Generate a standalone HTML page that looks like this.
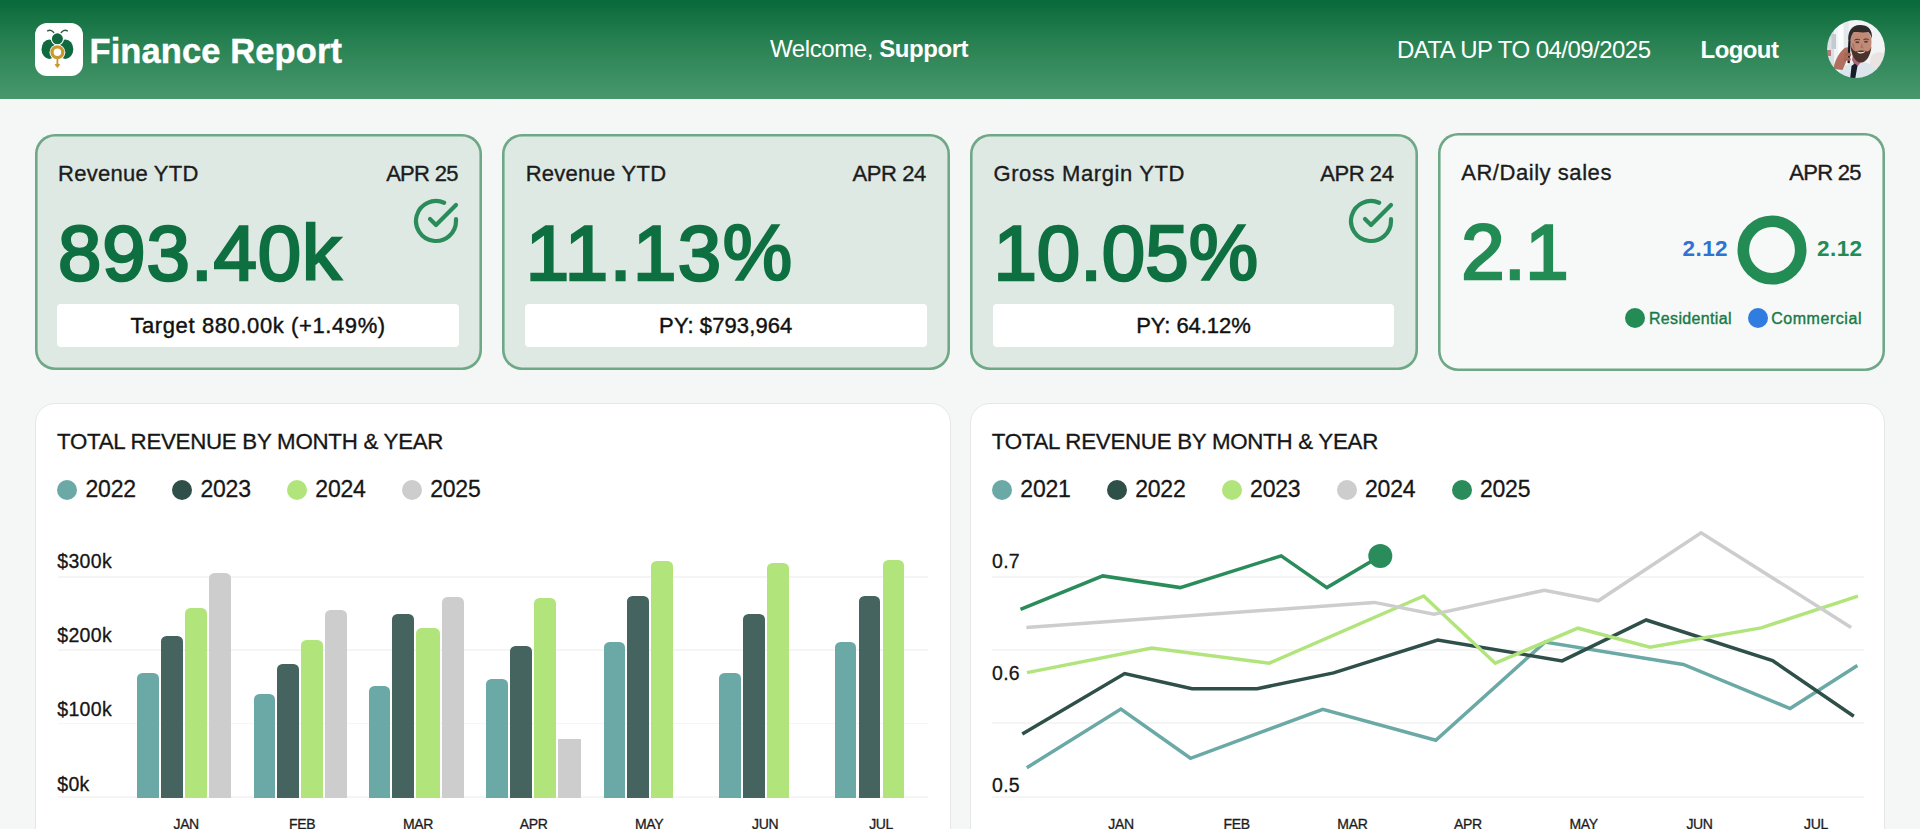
<!DOCTYPE html><html lang="en"><head><meta charset="utf-8"><title>Finance Report</title><style>
*{box-sizing:border-box;margin:0;padding:0}
html,body{width:1920px;height:829px;overflow:hidden}
body{background:#f5f7f6;font-family:"Liberation Sans", sans-serif;color:#1a1a1a;position:relative}
.t{position:absolute;white-space:nowrap;line-height:1}
.hdr{position:absolute;left:0;top:0;width:1920px;height:98.5px;background:linear-gradient(180deg,#09693a 0%,#298253 45%,#48986c 100%)}
.logo{position:absolute;left:34.5px;top:22.5px;width:48px;height:53.5px;background:#fff;border-radius:12px}
.hdr .t{color:#fff}
.card{position:absolute;top:134px;width:447.6px;height:235.5px;border:3px solid transparent;border-radius:20px;background:#dee9e3}
.card::before{content:'';position:absolute;left:-3px;top:-3px;right:-3px;bottom:-3px;border-radius:20px;box-shadow:inset 0 0 0 2.6px #6ea886}
.card.light{background:#f6f9f7}
.card .ttl{font-size:22px;color:#1c1c1c;-webkit-text-stroke:0.35px #1c1c1c}
.card .big{font-weight:normal}
.pill{position:absolute;left:19.6px;top:167px;width:401.5px;height:42.5px;background:#fff;border-radius:4px;text-align:center;font-size:22px;line-height:43.5px;color:#111;-webkit-text-stroke:0.4px #111}
.panel{position:absolute;top:403.3px;width:915.5px;height:460px;background:#fff;border:1px solid #e5e8e6;border-radius:20px}
.dot{position:absolute;width:20px;height:20px;border-radius:50%}
.grid{position:absolute;height:1.8px;background:#f5f5f5}
.bar{position:absolute;border-radius:5.5px 5.5px 0 0}
</style></head><body>
<div class="hdr">
<div class="logo"><svg style="position:absolute;left:-0.6px;top:-0.3px" width="48" height="53.5" viewBox="0 0 48 53.5"><path d="M13.6 8.9c2.6-1.5 5.3-.4 7.3 3.4" fill="none" stroke="#2c5a43" stroke-width="1.3" stroke-linecap="round"/><path d="M33.4 8.9c-2.6-1.5-5.3-.4-7.3 3.4" fill="none" stroke="#2c5a43" stroke-width="1.3" stroke-linecap="round"/><ellipse cx="15.4" cy="27.2" rx="7.9" ry="9.7" fill="#0f6a3f"/><ellipse cx="31.4" cy="27.2" rx="7.9" ry="9.7" fill="#0f6a3f"/><circle cx="23.4" cy="16.8" r="6.1" fill="#0f6a3f" stroke="#fff" stroke-width="1.2"/><circle cx="23.4" cy="30.3" r="7.9" fill="#fff"/><circle cx="23.4" cy="30.3" r="5.4" fill="none" stroke="#c9992e" stroke-width="3.3"/><rect x="22.5" y="35" width="1.8" height="8.5" fill="#c9992e"/><path d="M20.5 42.6l2.9-1.2 2.9 1.2-2.9 3.4z" fill="#c9992e"/></svg></div>
<span class="t" id="h1" style="left:89.5px;top:33.8px;font-size:34.5px;font-weight:bold;letter-spacing:0.1px;-webkit-text-stroke:0.4px #fff">Finance Report</span>
<span class="t" id="h2" style="left:770px;top:37.3px;font-size:24px;letter-spacing:-0.42px">Welcome, <b>Support</b></span>
<span class="t" id="h3" style="left:1397px;top:37.6px;font-size:24px;letter-spacing:-0.53px">DATA UP TO 04/09/2025</span>
<span class="t" id="h4" style="left:1700.6px;top:37.6px;font-size:24px;font-weight:bold;letter-spacing:-0.6px">Logout</span>
<svg style="position:absolute;left:1827px;top:20px" width="58" height="58" viewBox="0 0 58 58"><defs><clipPath id="av"><circle cx="29" cy="29" r="29"/></clipPath><filter id="bl" x="-10%" y="-10%" width="120%" height="120%"><feGaussianBlur stdDeviation="0.7"/></filter></defs><g clip-path="url(#av)"><g filter="url(#bl)"><rect x="-4" y="-4" width="66" height="66" fill="#f1f3f4"/><rect x="-2" y="6" width="9" height="40" fill="#d9dfe2"/><rect x="4.5" y="14" width="4.5" height="15" fill="#c3cbd0"/><rect x="11" y="-2" width="5" height="42" fill="#fbfcfc"/><rect x="17" y="-2" width="4.5" height="42" fill="#e4e8ea"/><path d="M44 36c5-5 12-5 18 0v26H40z" fill="#e9e4e2"/><rect x="-2" y="30" width="6" height="6" fill="#b77a78"/><path d="M9 62c1-12 9-18 19-20l8 0c10 2 15 7 17 20z" fill="#dde5ec"/><path d="M25 40l4 8 7-8-1-6h-9z" fill="#a7677a"/><path d="M23.5 22c0-8 4-12 10.500-12 6.500 0 10.500 4 10.500 12 0 10-4.500 19-10.500 19-6 0-10.500-9-10.500-19z" fill="#c08a76"/><path d="M21.500 22c-1.500-10 3-17 11.500-17 8 0 12.500 4 12 14-1-4-2.500-6-4-7-5 1-11 0-14 0-2 2-3.500 5-3.500 10z" fill="#2d2a29"/><path d="M23.500 25c.5 10 4.500 17.500 10.500 17.500 5.500 0 9.500-7 10.500-16-1 3-2.500 4.500-4 5-4-1.500-8-1.500-12 0-2-1-4-3-5-6.500z" fill="#4b3129"/><path d="M30 31.500c2.500 1 5.500 1 8.500-.5-.8 3-7.500 3.500-8.500.5z" fill="#f5ece8"/><ellipse cx="30.300" cy="22.300" rx="2" ry="1" fill="#5a3a30"/><ellipse cx="39" cy="21.800" rx="2" ry="1" fill="#5a3a30"/><path d="M27.500 20.200c1.800-1.200 3.800-1.200 5.400-.3M36.500 19.700c1.800-1 3.800-.9 5.300.2" stroke="#3a2a25" stroke-width="1" fill="none"/><path d="M34.500 22.500l-1 5.500 3 .3z" fill="#a97562"/><path d="M25 24c.5 3 1.500 5 3 6.500l-1-7z" fill="#a8735f"/><path d="M6.500 49c1-8 5-15 9.500-19.500 2-2 5-3 6-1.500 1 2-.5 6-1.500 9-1 4-3 9-5 13z" fill="#b16f5e"/><path d="M21.300 21.500l2.300.3-.8 21.500-2.300-.2z" fill="#17181c"/><path d="M17.500 33.500c2-1.200 5.500-.8 6.800.5l-.5 2.600c-2-.8-4.500-.8-6.500 0zM17 38c2-1 5.200-.8 6.800.4l-.5 2.600c-2-.8-4.500-.8-6.600.2z" fill="#a96553"/><path d="M24.500 46l3.200-2.500 2.800 2.300-2.500 14h-5z" fill="#181d2c"/></g></g></svg>
</div>
<div class="card" style="left:34.75px">
<span class="t ttl" style="left:20.3px;top:26.2px;letter-spacing:0.25px">Revenue YTD</span>
<span class="t ttl" style="right:21.6px;top:26.2px;letter-spacing:-0.7px">APR 25</span>
<span class="t big" style="left:20.3px;top:77px;font-size:78px;color:#0e6f40;-webkit-text-stroke:2.6px #0e6f40;letter-spacing:0.9px">893.40k</span>
<svg style="position:absolute;left:373.8px;top:59.6px" width="48" height="48" viewBox="0 0 24 24" fill="none" stroke="#2a8c5a" stroke-width="2.1" stroke-linecap="round" stroke-linejoin="round"><path d="M22 11.08V12a10 10 0 1 1-5.93-9.14"/><polyline points="22 4 12 14.01 9 11.01"/></svg>
<div class="pill" style="letter-spacing:0.6px">Target 880.00k (+1.49%)</div>

</div>
<div class="card" style="left:502.45px">
<span class="t ttl" style="left:20.3px;top:26.2px;letter-spacing:0.25px">Revenue YTD</span>
<span class="t ttl" style="right:21.2px;top:26.2px;letter-spacing:-0.4px">APR 24</span>
<span class="t big" style="left:20.3px;top:77px;font-size:78px;color:#0e6f40;-webkit-text-stroke:2.6px #0e6f40;letter-spacing:1.5px">11.13%</span>
<div class="pill" style="letter-spacing:0.1px">PY: $793,964</div>

</div>
<div class="card" style="left:970.15px">
<span class="t ttl" style="left:20.3px;top:26.2px;letter-spacing:0.62px">Gross Margin YTD</span>
<span class="t ttl" style="right:21.2px;top:26.2px;letter-spacing:-0.4px">APR 24</span>
<span class="t big" style="left:20.3px;top:77px;font-size:78px;color:#0e6f40;-webkit-text-stroke:2.6px #0e6f40;letter-spacing:0px">10.05%</span>
<svg style="position:absolute;left:373.8px;top:59.6px" width="48" height="48" viewBox="0 0 24 24" fill="none" stroke="#2a8c5a" stroke-width="2.1" stroke-linecap="round" stroke-linejoin="round"><path d="M22 11.08V12a10 10 0 1 1-5.93-9.14"/><polyline points="22 4 12 14.01 9 11.01"/></svg>
<div class="pill" style="letter-spacing:-0.05px">PY: 64.12%</div>

</div>
<div class="card light" style="left:1437.9px;top:133px;height:237.5px">
<span class="t ttl" style="left:20.3px;top:26.2px;letter-spacing:0.55px">AR/Daily sales</span>
<span class="t ttl" style="right:21.6px;top:26.2px;letter-spacing:-0.7px">APR 25</span>
<span class="t big" style="left:20.3px;top:77px;font-size:78px;color:#238b54;-webkit-text-stroke:2.6px #238b54;letter-spacing:-0.5px">2.1</span>
<span class="t" style="left:241.7px;top:102.4px;font-size:22.5px;font-weight:bold;letter-spacing:0.4px;color:#2f73d2">2.12</span><svg style="position:absolute;left:295.2px;top:77.5px" width="72" height="72" viewBox="0 0 72 72"><circle cx="36" cy="36" r="28.7" fill="none" stroke="#238b54" stroke-width="11.6"/></svg><span class="t" style="right:20px;top:102.4px;font-size:22.5px;font-weight:bold;letter-spacing:0.4px;color:#238b54">2.12</span><span class="dot" style="left:184.2px;top:171.8px;background:#238b54"></span><span class="t" style="left:208px;top:174.7px;font-size:16px;color:#187a48;letter-spacing:0.35px;-webkit-text-stroke:0.4px #187a48">Residential</span><span class="dot" style="left:307px;top:171.8px;background:#2f7de0"></span><span class="t" style="right:20.5px;top:174.7px;font-size:16px;color:#187a48;letter-spacing:0.55px;-webkit-text-stroke:0.4px #187a48">Commercial</span>
</div>
<div class="panel" style="left:35px">
<span class="t" style="left:21px;top:26.4px;font-size:22.3px;letter-spacing:-0.27px;color:#161616;-webkit-text-stroke:0.3px #161616">TOTAL REVENUE BY MONTH &amp; YEAR</span>
<span class="dot" style="left:21.2px;top:75.7px;background:#6aa9a6"></span>
<span class="t" style="left:49.5px;top:74px;font-size:23px;letter-spacing:-0.2px;color:#161616;-webkit-text-stroke:0.3px #161616">2022</span>
<span class="dot" style="left:136.1px;top:75.7px;background:#2f4f49"></span>
<span class="t" style="left:164.4px;top:74px;font-size:23px;letter-spacing:-0.2px;color:#161616;-webkit-text-stroke:0.3px #161616">2023</span>
<span class="dot" style="left:251.0px;top:75.7px;background:#b1e57b"></span>
<span class="t" style="left:279.3px;top:74px;font-size:23px;letter-spacing:-0.2px;color:#161616;-webkit-text-stroke:0.3px #161616">2024</span>
<span class="dot" style="left:365.9px;top:75.7px;background:#cdcdcd"></span>
<span class="t" style="left:394.2px;top:74px;font-size:23px;letter-spacing:-0.2px;color:#161616;-webkit-text-stroke:0.3px #161616">2025</span>
<div class="grid" style="left:21.9px;top:171.6px;width:870px"></div><div class="grid" style="left:21.9px;top:245.1px;width:870px"></div><div class="grid" style="left:21.9px;top:318.4px;width:870px"></div><div class="grid" style="left:21.9px;top:392.2px;width:870px"></div><span class="t" style="left:21.3px;top:147.9px;font-size:19.5px;letter-spacing:0.3px;color:#161616;-webkit-text-stroke:0.3px #161616">$300k</span><span class="t" style="left:21.3px;top:222.0px;font-size:19.5px;letter-spacing:0.3px;color:#161616;-webkit-text-stroke:0.3px #161616">$200k</span><span class="t" style="left:21.3px;top:296.2px;font-size:19.5px;letter-spacing:0.3px;color:#161616;-webkit-text-stroke:0.3px #161616">$100k</span><span class="t" style="left:21.3px;top:371.0px;font-size:19.5px;letter-spacing:0.3px;color:#161616;-webkit-text-stroke:0.3px #161616">$0k</span><div class="bar" style="left:101.1px;top:268.6px;width:21.6px;height:125.0px;background:#6aa9a6;"></div><div class="bar" style="left:125.2px;top:232.1px;width:21.6px;height:161.5px;background:#46645f;"></div><div class="bar" style="left:149.2px;top:203.5px;width:21.6px;height:190.1px;background:#b1e57b;"></div><div class="bar" style="left:173.1px;top:169.0px;width:21.6px;height:224.6px;background:#cdcdcd;"></div><span class="t" style="left:125.2px;top:413.0px;width:50px;text-align:center;font-size:14px;letter-spacing:-0.35px;color:#1d1d1d;-webkit-text-stroke:0.3px #1d1d1d">JAN</span><div class="bar" style="left:217.6px;top:289.3px;width:21.6px;height:104.3px;background:#6aa9a6;"></div><div class="bar" style="left:241.4px;top:259.5px;width:21.6px;height:134.1px;background:#46645f;"></div><div class="bar" style="left:265.2px;top:235.6px;width:21.6px;height:158.0px;background:#b1e57b;"></div><div class="bar" style="left:289.0px;top:205.9px;width:21.6px;height:187.7px;background:#cdcdcd;"></div><span class="t" style="left:241.2px;top:413.0px;width:50px;text-align:center;font-size:14px;letter-spacing:-0.35px;color:#1d1d1d;-webkit-text-stroke:0.3px #1d1d1d">FEB</span><div class="bar" style="left:332.8px;top:281.4px;width:21.6px;height:112.2px;background:#6aa9a6;"></div><div class="bar" style="left:356.4px;top:209.7px;width:21.6px;height:183.9px;background:#46645f;"></div><div class="bar" style="left:380.3px;top:223.5px;width:23.5px;height:170.1px;background:#b1e57b;"></div><div class="bar" style="left:406.2px;top:192.3px;width:21.6px;height:201.3px;background:#cdcdcd;"></div><span class="t" style="left:357.1px;top:413.0px;width:50px;text-align:center;font-size:14px;letter-spacing:-0.35px;color:#1d1d1d;-webkit-text-stroke:0.3px #1d1d1d">MAR</span><div class="bar" style="left:450.2px;top:275.2px;width:21.6px;height:118.4px;background:#6aa9a6;"></div><div class="bar" style="left:474.2px;top:241.5px;width:21.6px;height:152.1px;background:#46645f;"></div><div class="bar" style="left:498.1px;top:194.2px;width:21.6px;height:199.4px;background:#b1e57b;"></div><div class="bar" style="left:521.6px;top:334.8px;width:23.6px;height:58.8px;background:#cdcdcd;border-radius:0;"></div><span class="t" style="left:472.6px;top:413.0px;width:50px;text-align:center;font-size:14px;letter-spacing:-0.35px;color:#1d1d1d;-webkit-text-stroke:0.3px #1d1d1d">APR</span><div class="bar" style="left:567.5px;top:237.6px;width:21.6px;height:156.0px;background:#6aa9a6;"></div><div class="bar" style="left:591.4px;top:192.0px;width:21.6px;height:201.6px;background:#46645f;"></div><div class="bar" style="left:615.2px;top:156.6px;width:21.6px;height:237.0px;background:#b1e57b;"></div><span class="t" style="left:588.2px;top:413.0px;width:50px;text-align:center;font-size:14px;letter-spacing:-0.35px;color:#1d1d1d;-webkit-text-stroke:0.3px #1d1d1d">MAY</span><div class="bar" style="left:683.0px;top:268.6px;width:21.6px;height:125.0px;background:#6aa9a6;"></div><div class="bar" style="left:707.1px;top:209.7px;width:21.6px;height:183.9px;background:#46645f;"></div><div class="bar" style="left:731.0px;top:158.4px;width:21.6px;height:235.2px;background:#b1e57b;"></div><span class="t" style="left:704.1px;top:413.0px;width:50px;text-align:center;font-size:14px;letter-spacing:-0.35px;color:#1d1d1d;-webkit-text-stroke:0.3px #1d1d1d">JUN</span><div class="bar" style="left:798.9px;top:237.6px;width:21.6px;height:156.0px;background:#6aa9a6;"></div><div class="bar" style="left:822.8px;top:192.0px;width:21.6px;height:201.6px;background:#46645f;"></div><div class="bar" style="left:846.7px;top:156.1px;width:21.6px;height:237.5px;background:#b1e57b;"></div><span class="t" style="left:820.1px;top:413.0px;width:50px;text-align:center;font-size:14px;letter-spacing:-0.35px;color:#1d1d1d;-webkit-text-stroke:0.3px #1d1d1d">JUL</span>
</div>
<div class="panel" style="left:969.8px">
<span class="t" style="left:21px;top:26.4px;font-size:22.3px;letter-spacing:-0.27px;color:#161616;-webkit-text-stroke:0.3px #161616">TOTAL REVENUE BY MONTH &amp; YEAR</span>
<span class="dot" style="left:21.2px;top:75.7px;background:#6aa9a6"></span>
<span class="t" style="left:49.5px;top:74px;font-size:23px;letter-spacing:-0.2px;color:#161616;-webkit-text-stroke:0.3px #161616">2021</span>
<span class="dot" style="left:136.1px;top:75.7px;background:#2f4f49"></span>
<span class="t" style="left:164.4px;top:74px;font-size:23px;letter-spacing:-0.2px;color:#161616;-webkit-text-stroke:0.3px #161616">2022</span>
<span class="dot" style="left:251.0px;top:75.7px;background:#b1e57b"></span>
<span class="t" style="left:279.3px;top:74px;font-size:23px;letter-spacing:-0.2px;color:#161616;-webkit-text-stroke:0.3px #161616">2023</span>
<span class="dot" style="left:365.9px;top:75.7px;background:#cdcdcd"></span>
<span class="t" style="left:394.2px;top:74px;font-size:23px;letter-spacing:-0.2px;color:#161616;-webkit-text-stroke:0.3px #161616">2024</span>
<span class="dot" style="left:480.8px;top:75.7px;background:#2a8c5a"></span>
<span class="t" style="left:509.1px;top:74px;font-size:23px;letter-spacing:-0.2px;color:#161616;-webkit-text-stroke:0.3px #161616">2025</span>
<div class="grid" style="left:21.200000000000045px;top:171.5px;width:872px"></div><div class="grid" style="left:21.200000000000045px;top:245.2px;width:872px"></div><div class="grid" style="left:21.200000000000045px;top:318.1px;width:872px"></div><div class="grid" style="left:21.200000000000045px;top:392.0px;width:872px"></div><span class="t" style="left:21.2px;top:147.8px;font-size:19.5px;letter-spacing:0.3px;color:#161616;-webkit-text-stroke:0.3px #161616">0.7</span><span class="t" style="left:21.2px;top:259.6px;font-size:19.5px;letter-spacing:0.3px;color:#161616;-webkit-text-stroke:0.3px #161616">0.6</span><span class="t" style="left:21.2px;top:371.3px;font-size:19.5px;letter-spacing:0.3px;color:#161616;-webkit-text-stroke:0.3px #161616">0.5</span><svg style="position:absolute;left:0;top:0" width="913" height="424" viewBox="970.8 404.3 913 424" fill="none" stroke-width="3.5" stroke-linejoin="miter"><polyline stroke="#6aa9a6" points="1026.6,768.0 1120.7,709.3 1190.3,758.6 1322.6,709.7 1435.6,740.5 1544.8,642.4 1683.1,664.8 1789.9,708.8 1857.2,665.9"/><polyline stroke="#2f4f49" points="1022.1,734.2 1124.5,673.8 1191.8,689.0 1256.9,689.0 1333.4,673.2 1437.5,640.3 1561.9,661.2 1646.0,620.3 1772.3,660.8 1853.6,716.6"/><polyline stroke="#b1e57b" points="1026.8,672.9 1151.6,648.4 1269.0,663.5 1423.5,596.3 1495.0,663.5 1577.7,628.5 1649.7,647.6 1760.9,628.2 1857.7,596.4"/><polyline stroke="#cdcdcd" points="1026.2,627.7 1374.1,602.7 1433.8,614.5 1544.2,590.5 1598.1,601.1 1700.9,533.1 1850.9,627.7"/><polyline stroke="#2a8c5a" points="1020.3,609.6 1102.6,576.2 1180.0,587.9 1281.0,556.2 1326.7,587.9 1380.1,556.2"/><circle cx="1380.1" cy="556.2" r="12" fill="#2a8c5a"/></svg><span class="t" style="left:125.2px;top:413.0px;width:50px;text-align:center;font-size:14px;letter-spacing:-0.35px;color:#1d1d1d;-webkit-text-stroke:0.3px #1d1d1d">JAN</span><span class="t" style="left:240.8px;top:413.0px;width:50px;text-align:center;font-size:14px;letter-spacing:-0.35px;color:#1d1d1d;-webkit-text-stroke:0.3px #1d1d1d">FEB</span><span class="t" style="left:356.6px;top:413.0px;width:50px;text-align:center;font-size:14px;letter-spacing:-0.35px;color:#1d1d1d;-webkit-text-stroke:0.3px #1d1d1d">MAR</span><span class="t" style="left:472.0px;top:413.0px;width:50px;text-align:center;font-size:14px;letter-spacing:-0.35px;color:#1d1d1d;-webkit-text-stroke:0.3px #1d1d1d">APR</span><span class="t" style="left:587.8px;top:413.0px;width:50px;text-align:center;font-size:14px;letter-spacing:-0.35px;color:#1d1d1d;-webkit-text-stroke:0.3px #1d1d1d">MAY</span><span class="t" style="left:703.7px;top:413.0px;width:50px;text-align:center;font-size:14px;letter-spacing:-0.35px;color:#1d1d1d;-webkit-text-stroke:0.3px #1d1d1d">JUN</span><span class="t" style="left:820.2px;top:413.0px;width:50px;text-align:center;font-size:14px;letter-spacing:-0.35px;color:#1d1d1d;-webkit-text-stroke:0.3px #1d1d1d">JUL</span>
</div>
</body></html>
